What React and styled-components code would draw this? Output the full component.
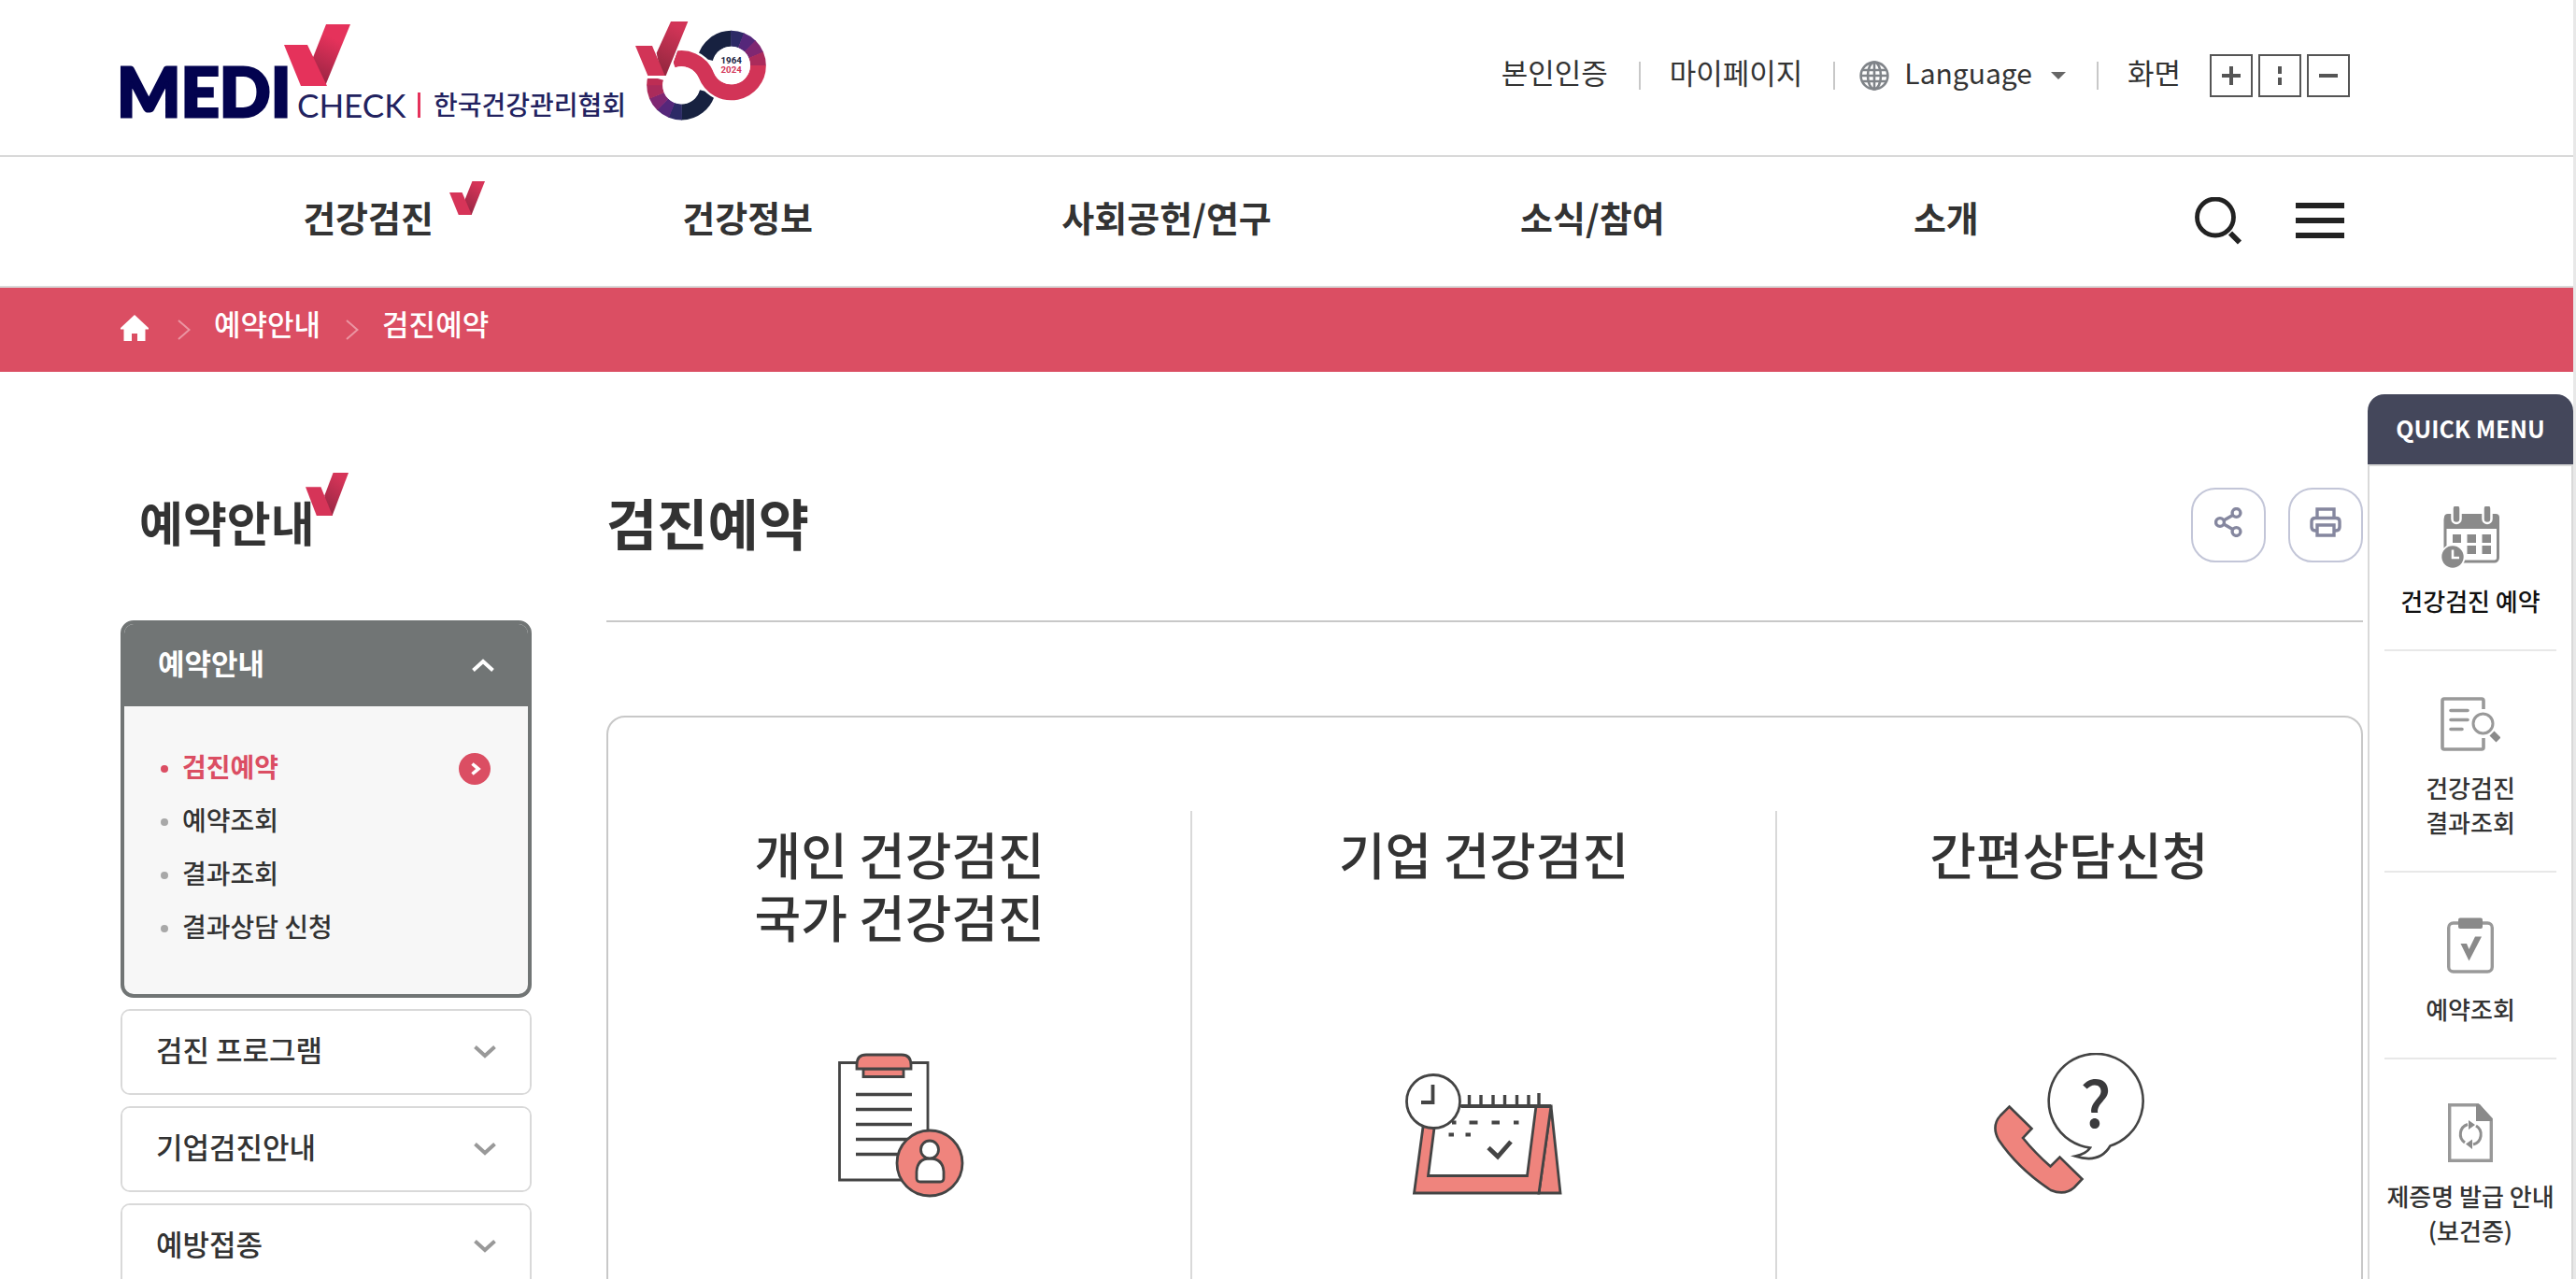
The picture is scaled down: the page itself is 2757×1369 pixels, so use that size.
import React, { useId, useState } from "react";
import styled, { createGlobalStyle } from "styled-components";

const GlobalStyle = createGlobalStyle`
  *, *::before, *::after { box-sizing: border-box; }
  html { scrollbar-width: none; }
  body {
    margin: 0;
    background: #fff;
    color: #333;
    font-family: "Noto Sans CJK KR", "Noto Sans", sans-serif;
    font-size: 31px;
    line-height: 46px;
  }
  a { color: inherit; text-decoration: none; }
  button { margin: 0; padding: 0; border: 0; background: none; color: inherit; font: inherit; cursor: pointer; }
  ul, ol { margin: 0; padding: 0; list-style: none; }
  h1, h2, h3 { margin: 0; font-weight: 700; }
  svg { display: block; flex: none; }
`;

const Page = styled.div`
  min-height: 100vh;
  border-right: 3px solid #e8e8e8;
`;

const Row = styled.div`
  display: flex;
  align-items: center;
  padding: 0 225px 0 129px;
`;

const TopBar = styled(Row)`
  height: 168px;
  padding-left: 119px;
  border-bottom: 2px solid #d9d9d9;
`;

const Brand = styled.div`
  display: flex;
  align-items: flex-start;
  align-self: flex-start;
  padding-top: 23px;
  margin-right: auto;
`;

const Utility = styled.ul`
  display: flex;
  align-items: center;
  padding: 0 14px 12px 0;
`;

const UtilityItem = styled.li`
  display: flex;
  align-items: center;
  & + &::before {
    content: "";
    width: 2px;
    height: 30px;
    margin: 8px 31px 0 33px;
    background: #c8c8c8;
  }
`;

const LanguageItem = styled(UtilityItem)`
  & + &::before, ${UtilityItem} + &::before { margin-right: 26px; }
`;

const LanguageButton = styled.button`
  display: flex;
  align-items: center;
  font-size: 30px;
  svg { margin-top: 8px; }
`;

const LanguageLabel = styled.span`
  padding: 0 20px 0 16px;
`;

const ZoomGroup = styled.div`
  display: flex;
  gap: 6px;
  margin: 8px 0 0 31px;
`;

const ZoomButton = styled.button`
  display: flex;
  align-items: center;
  justify-content: center;
  width: 46px;
  height: 46px;
  border: 2px solid #555;
`;

const NavBar = styled(Row)`
  height: 140px;
  border-bottom: 2px solid #d9d9d9;
`;

const NavList = styled.ul`
  display: flex;
  flex: 1;
  justify-content: space-around;
  padding: 0 0 10px 62px;
`;

const NavItem = styled.li`
  position: relative;
  font-size: 38px;
  line-height: 56px;
  font-weight: 700;
`;

const NavCheck = styled.span`
  position: absolute;
  left: 100%;
  top: -10px;
  margin-left: 17px;
`;

const NavTools = styled.div`
  display: flex;
  align-items: center;
  gap: 56px;
  padding: 0 20px 0 98px;
`;

const CrumbBar = styled.nav`
  background: #db4e63;
  color: #fff;
`;

const CrumbList = styled.ol`
  display: flex;
  align-items: center;
  height: 90px;
  padding: 0 225px 0 129px;
`;

const Crumb = styled.li`
  display: flex;
  align-items: center;
  font-weight: 500;
  svg { margin-right: 25px; }
  & + & { margin-left: 27px; }
  a { padding-bottom: 14px; }
`;

const HomeCrumb = styled(Crumb)`
  a { padding: 0; }
  svg { margin: 0 4px 4px 0; }
`;

const Main = styled.div`
  display: grid;
  grid-template-columns: 440px minmax(0, 1fr);
  column-gap: 80px;
  padding: 0 225px 0 129px;
`;

const SideTitle = styled.h2`
  display: flex;
  align-items: flex-start;
  height: 266px;
  padding: 122px 0 0 20px;
  font-size: 51px;
  line-height: 76px;
`;

const SideCheck = styled.span`
  margin: -14px 0 0 -10px;
`;

const Accordion = styled.ul`
  display: grid;
  gap: 12px;
`;

const Panel = styled.li`
  overflow: hidden;
  border: ${(p) => (p.$open ? "4px solid #717575" : "2px solid #d9d9d9")};
  border-radius: ${(p) => (p.$open ? "14px" : "10px")};
  background: ${(p) => (p.$open ? "#f7f7f7" : "#fff")};
`;

const PanelButton = styled.button`
  display: flex;
  align-items: center;
  justify-content: space-between;
  width: 100%;
  height: 88px;
  padding: 0 36px;
  background: ${(p) => (p.$open ? "#717575" : "#fff")};
  color: ${(p) => (p.$open ? "#fff" : "#333")};
  font-weight: ${(p) => (p.$open ? 700 : 500)};
  text-align: left;
  span { padding-bottom: 6px; }
`;

const SubList = styled.ul`
  padding: 38px 40px 42px 39px;
`;

const SubLink = styled.a`
  display: flex;
  align-items: center;
  height: 57px;
  color: ${(p) => (p.$active ? "#db4e63" : "#333")};
  font-size: 28px;
  line-height: 40px;
  font-weight: ${(p) => (p.$active ? 700 : 500)};
  svg { margin-left: auto; }
  span { padding-bottom: 6px; }
  &::before {
    content: "";
    width: 8px;
    height: 8px;
    margin-right: 15px;
    border-radius: 50%;
    background: ${(p) => (p.$active ? "#db4e63" : "#a8a8a8")};
  }
`;

const TitleRow = styled.div`
  display: flex;
  align-items: flex-start;
  gap: 24px;
  height: 268px;
  padding-top: 124px;
  border-bottom: 2px solid #c8c8c8;
`;

const PageTitle = styled.h1`
  margin: -6px auto 0 0;
  font-size: 59px;
  line-height: 86px;
`;

const RoundButton = styled.button`
  display: flex;
  align-items: center;
  justify-content: center;
  width: 80px;
  height: 80px;
  padding-bottom: 6px;
  border: 2px solid #c3c6d8;
  border-radius: 26px;
`;

const Card = styled.ul`
  display: grid;
  grid-template-columns: repeat(3, minmax(0, 1fr));
  margin-top: 100px;
  padding: 100px 0;
  border: 2px solid #c8c8c8;
  border-radius: 20px;
`;

const Service = styled.li`
  padding: 12px 0 160px;
  &:not(:last-child) { border-right: 2px solid #d9d9d9; }
`;

const ServiceLink = styled.a`
  display: flex;
  flex-direction: column;
  align-items: center;
  gap: 113px;
`;

const ServiceName = styled.h3`
  min-height: 134px;
  font-size: 54px;
  line-height: 67px;
  font-weight: 500;
  text-align: center;
`;

const Quick = styled.aside`
  position: absolute;
  top: 422px;
  right: 3px;
  width: 220px;
`;

const QuickHead = styled.h2`
  height: 75px;
  padding-top: 16px;
  border-radius: 18px 18px 0 0;
  background: #44475b;
  color: #fff;
  font-size: 25px;
  line-height: 40px;
  text-align: center;
`;

const QuickList = styled.ul`
  padding: 0 16px;
  border: 2px solid #d9d9d9;
  background: #fff;
`;

const QuickItem = styled.li`
  padding: 44px 0 34px;
  &:first-child { padding-top: 42px; color: #111; }
  & + & { border-top: 2px solid #e8e8e8; }
`;

const QuickLink = styled.a`
  display: flex;
  flex-direction: column;
  align-items: center;
  gap: 15px;
  font-size: 26px;
  line-height: 37px;
  font-weight: 500;
  text-align: center;
  white-space: nowrap;
`;

const QuickIcon = styled.span`
  display: flex;
  align-items: center;
  height: 68px;
`;

const Lines = ({ items }) =>
  items.map((line, i) => (
    <React.Fragment key={line}>
      {i > 0 && <br />}
      {line}
    </React.Fragment>
  ));

function CheckMark({ width, height }) {
  const id = useId();
  return (
    <svg width={width} height={height} viewBox="0 0 140 136" preserveAspectRatio="none" aria-hidden="true">
      <defs>
        <linearGradient id={id} x1="0.7" y1="0" x2="0.3" y2="1">
          <stop offset="0.1" stopColor="#d63458" />
          <stop offset="1" stopColor="#982744" />
        </linearGradient>
      </defs>
      <path d="M90 0H140L87 136H62V72Z" fill={`url(#${id})`} />
      <path d="M0 45H50L88 136H36Z" fill="#d63458" />
    </svg>
  );
}

function Wordmark() {
  return (
    <svg width="561" height="130" viewBox="119 23 561 130" role="img" aria-label="MEDICHECK 한국건강관리협회">
      <defs>
        <linearGradient id="wordmark-leg" x1="0.7" y1="0" x2="0.4" y2="1">
          <stop offset="0.25" stopColor="#e5325b" />
          <stop offset="1" stopColor="#9a2443" />
        </linearGradient>
      </defs>
      <text x="125" y="125" fontFamily="Lato, sans-serif" fontWeight="900" fontSize="72" fill="#03034f" stroke="#03034f" strokeWidth="3">MEDI</text>
      <path d="M349 26H375L348 92H334V64Z" fill="url(#wordmark-leg)" />
      <path d="M304 48H329L350 92H322Z" fill="#e5325b" />
      <text x="318" y="126" fontFamily="Lato, sans-serif" fontSize="35" fill="#22225f">CHECK</text>
      <rect x="447" y="99" width="3" height="27" fill="#e5325b" />
      <text x="464" y="123" fontFamily="Noto Sans CJK KR, sans-serif" fontWeight="500" fontSize="28" fill="#22225f">한국건강관리협회</text>
    </svg>
  );
}

const ring = (cx, cy, from, to) => {
  const r = 86;
  const p = (a) => `${cx + r * Math.cos((a * Math.PI) / 180)} ${cy + r * Math.sin((a * Math.PI) / 180)}`;
  return `M${p(from)}A${r} ${r} 0 0 1 ${p(to)}`;
};

function Anniversary() {
  const shades = ["#172140", "#2c2a66", "#55277a", "#7f2772", "#ab2b5b"];
  const right = [-166, -90, -68, -45, -22, 0];
  const left = [14, 90, 112, 135, 158, 181];
  return (
    <svg width="140" height="106" viewBox="57 39 420 318" role="img" aria-label="1964 2024">
      <defs>
        <linearGradient id="anniversary-leg" x1="0.7" y1="0" x2="0.4" y2="1">
          <stop offset="0.1" stopColor="#d23457" />
          <stop offset="1" stopColor="#94273f" />
        </linearGradient>
      </defs>
      <g fill="none" strokeWidth="51">
        {shades.map((c, i) => (
          <g key={c} stroke={c}>
            <path d={ring(365, 180, right[i] - (i && 1), right[i + 1])} />
            <path d={ring(205, 244, left[i] - (i && 1), left[i + 1])} />
          </g>
        ))}
        <path d={ring(205, 244, 180, 196)} stroke="#bd2d54" />
        <path d="M176 163A86 86 0 0 1 285 212A86 86 0 0 0 365 266" stroke="#fff" strokeWidth="65" />
        <path d="M176 163A86 86 0 0 1 285 212A86 86 0 0 0 451 180" stroke="#d23457" />
      </g>
      <circle cx="365" cy="180" r="61" fill="#fff" />
      <circle cx="205" cy="244" r="60" fill="#fff" />
      <path d="M226 39L163 213L163 222H80V110L171 39Z" fill="#fff" />
      <path d="M192 133L168 200L140 222L150 120Z" fill="#fff" />
      <path d="M171 39H226L155 213H140L125 140Z" fill="url(#anniversary-leg)" />
      <path d="M57 117H111L152 213H97Z" fill="#d23457" />
      <g fontFamily="Roboto, sans-serif" fontWeight="700" fontSize="29" textAnchor="middle">
        <text x="365" y="174" fill="#172140">1964</text>
        <text x="365" y="204" fill="#d23457">2024</text>
      </g>
    </svg>
  );
}

const Globe = () => (
  <svg width="32" height="32" viewBox="0 0 32 32" fill="none" stroke="#808489" strokeWidth="2.6" aria-hidden="true">
    <circle cx="16" cy="16" r="14.4" />
    <ellipse cx="16" cy="16" rx="7" ry="14.4" />
    <path d="M16 1V31M1.5 16H30.5M3.5 10H28.5M3.5 22H28.5" />
  </svg>
);

const Caret = () => (
  <svg width="16" height="8" viewBox="0 0 16 8" aria-hidden="true">
    <path d="M0 0H16L8 8Z" fill="#666" />
  </svg>
);

const zoomMarks = { plus: "M0 10H20M10 0V20", reset: "M10 0V8M10 12V20", minus: "M0 10H20" };

const ZoomMark = ({ kind }) => (
  <svg width="20" height="20" viewBox="0 0 20 20" stroke="#555" strokeWidth="4" aria-hidden="true">
    <path d={zoomMarks[kind]} />
  </svg>
);

const SearchIcon = () => (
  <svg width="52" height="52" viewBox="0 0 52 52" fill="none" stroke="#222" aria-hidden="true">
    <circle cx="22" cy="21.500" r="19.5" strokeWidth="4.8" />
    <path d="M38 38.500L48 48.500" strokeWidth="5.8" />
  </svg>
);

const MenuIcon = () => (
  <svg width="52" height="40" viewBox="0 0 52 40" stroke="#222" strokeWidth="6" aria-hidden="true">
    <path d="M0 3H52M0 19H52M0 35H52" />
  </svg>
);

const HomeIcon = () => (
  <svg width="30" height="28" viewBox="0 0 30 28" fill="#fff" aria-hidden="true">
    <path d="M15 0L30 14V15.500H26.500V28H18V20H12V28H3.500V15.500H0V14Z" />
  </svg>
);

const CrumbArrow = () => (
  <svg width="14" height="22" viewBox="0 0 14 22" fill="none" stroke="#eb95a2" strokeWidth="2" aria-hidden="true">
    <path d="M1 1L12.500 11L1 21" />
  </svg>
);

const Chevron = ({ open }) => (
  <svg width="24" height="14" viewBox="0 0 24 14" fill="none" stroke={open ? "#fff" : "#999"} strokeWidth="4" aria-hidden="true">
    <path d={open ? "M1.500 12.500L12 3L22.500 12.500" : "M1.500 1.500L12 11L22.500 1.500"} />
  </svg>
);

const ActiveArrow = () => (
  <svg width="34" height="34" viewBox="0 0 34 34" aria-hidden="true">
    <circle cx="17" cy="17" r="17" fill="#db4e63" />
    <path d="M14.500 11.500L21 17L14.500 22.500" fill="none" stroke="#fff" strokeWidth="3.600" />
  </svg>
);

const ShareIcon = () => (
  <svg width="30" height="32" viewBox="0 0 30 32" fill="none" stroke="#85879f" strokeWidth="3.400" aria-hidden="true">
    <circle cx="6" cy="16" r="4.400" />
    <circle cx="23.500" cy="6" r="4.400" />
    <circle cx="23.500" cy="26" r="4.400" />
    <path d="M10 14L19.500 8.500M10 18L19.500 23.500" />
  </svg>
);

const PrintIcon = () => (
  <svg width="34" height="32" viewBox="0 0 34 32" fill="none" stroke="#85879f" strokeWidth="3.400" aria-hidden="true">
    <path d="M8 11V2H26V11M8 25H6Q2 25 2 21V15Q2 11.500 6 11.500H28Q32 11.500 32 15V21Q32 25 28 25H26" />
    <path d="M8 19H26V30H8Z" />
  </svg>
);

const ClipboardArt = () => (
  <svg width="168" height="156" viewBox="0 0 168 156" stroke="#444" strokeWidth="2.800" fill="#ef847d" aria-hidden="true">
    <path d="M19.500 10.500H114V136H19.500Z" fill="#fff" />
    <path d="M45 17H88V25.500H45Z" />
    <path d="M38 17V13Q38 2 48 2H86Q96 2 96 13V17Z" />
    <path d="M37 44.500H97M37 60.500H97M37 76.500H97M37 92.500H97M37 108.500H97" strokeWidth="3.400" />
    <circle cx="116" cy="118" r="35" />
    <path d="M102 134V127Q103 113 116 113Q130 113 131 127V134Q131 138 127 138H106Q102 138 102 134Z" fill="#fff" />
    <circle cx="116" cy="103.500" r="9.500" fill="#fff" />
  </svg>
);

const CalendarArt = () => (
  <svg width="168" height="156" viewBox="0 0 168 156" stroke="#444" strokeWidth="2.800" fill="#ef847d" aria-hidden="true">
    <path d="M156 57L166 150H143Z" />
    <path d="M22 57H156L143 150H9.500Z" />
    <path d="M34 57H140L130.500 131.500H24.500Z" fill="#fff" />
    <path d="M60 57H156" strokeWidth="4" />
    <path d="M68.500 45V57M81 45V57M94 45V57M106.500 45V57M119.500 45V57M132 45V57M143 43V57" strokeWidth="3.400" />
    <path d="M50 74.500H54.500M68.500 74.500H77.500M92.500 74.500H101M116 74.500H121.500M46.500 87.500H52M64.500 87.500H70" strokeWidth="4" />
    <path d="M89 101.500L99 111L113 95" strokeWidth="4.800" fill="none" />
    <circle cx="30" cy="52" r="28.500" fill="#fff" />
    <path d="M29.500 34V53H17" strokeWidth="3.800" fill="none" />
  </svg>
);

const PhoneArt = () => (
  <svg width="168" height="156" viewBox="0 0 168 156" stroke="#444" strokeWidth="2.600" aria-hidden="true">
    <path d="M20.500 57.500L44.500 81L35 91Q48 107 64.500 121.500L74.500 111.500L98.500 135L90 144Q80 153 65 147Q30 124 9 93Q1 78 11 67Z" fill="#ef847d" />
    <path d="M128.500 99.500A50.500 50.500 0 1 0 107 101.500Q103 108 91 110.500Q117 119 128.500 99.500Z" fill="#fff" />
    <text x="113" y="80" fontSize="68" fontWeight="500" textAnchor="middle" fill="#3a3a3c" stroke="none">?</text>
  </svg>
);

const QuickCalendar = () => (
  <svg width="62" height="66" viewBox="0 0 62 66" fill="#8a8a8a" aria-hidden="true">
    <rect x="4" y="10" width="56.500" height="49" rx="4" fill="#fff" stroke="#8a8a8a" strokeWidth="3" />
    <path d="M3 24V12Q3 8 7 8H58Q62 8 62 12V24Z" />
    <g stroke="#fff" strokeWidth="2.500">
      <rect x="11.500" y="-2" width="9" height="20" rx="4.500" />
      <rect x="44.500" y="-2" width="9" height="20" rx="4.500" />
    </g>
    <path d="M12 30H21V39H12ZM27.500 30H37V39H27.500ZM43.500 30H53V39H43.500ZM27.500 42H37V51H27.500ZM43.500 42H53V51H43.500Z" />
    <circle cx="12" cy="54" r="13.500" fill="#fff" />
    <circle cx="12" cy="54" r="11.700" />
    <path d="M12 46.500V55H19" fill="none" stroke="#fff" strokeWidth="2.600" />
  </svg>
);

const QuickResult = () => (
  <svg width="64" height="58" viewBox="0 0 64 58" fill="none" stroke="#999" strokeWidth="3.600" aria-hidden="true">
    <path d="M46 13V4Q46 2 44 2H4Q2 2 2 4V54Q2 56 4 56H44Q46 56 46 54V44" />
    <path d="M11 14.500H29M11 24.500H29M11 34.500H23" strokeLinecap="round" />
    <circle cx="45.500" cy="28.500" r="10.500" strokeWidth="3" />
    <path d="M55 39L62 46" stroke="#8a8a8a" strokeWidth="7" />
  </svg>
);

const QuickCheck = () => (
  <svg width="50" height="60" viewBox="0 0 50 60" fill="#8a8a8a" aria-hidden="true">
    <rect x="1.700" y="6" width="46.600" height="52" rx="5" fill="#fff" stroke="#999" strokeWidth="3.400" />
    <rect x="12" y="0.500" width="26" height="11.500" rx="2" />
    <path d="M14.500 28H21L23.500 34L30 20.500H37L23.500 46.500Z" />
  </svg>
);

const QuickCertificate = () => (
  <svg width="48" height="63" viewBox="0 0 48 63" fill="#8a8a8a" aria-hidden="true">
    <path d="M1.700 1.700H32L46.300 17V61.300H1.700Z" fill="#fff" stroke="#999" strokeWidth="3.400" />
    <path d="M30 1H34L47 16V19H30Z" />
    <path d="M18 42A11 11 0 0 1 21 22.500M30 24A11 11 0 0 1 27 44" fill="none" stroke="#8f8f8f" strokeWidth="3" />
    <path d="M22 18L29 23L22 28ZM26 38.500V49L19 43.500Z" />
  </svg>
);

const menu = ["건강검진", "건강정보", "사회공헌/연구", "소식/참여", "소개"];

const panels = [
  { name: "예약안내", links: ["검진예약", "예약조회", "결과조회", "결과상담 신청"] },
  { name: "검진 프로그램", links: [] },
  { name: "기업검진안내", links: [] },
  { name: "예방접종", links: [] },
];

const services = [
  { lines: ["개인 건강검진", "국가 건강검진"], Art: ClipboardArt },
  { lines: ["기업 건강검진"], Art: CalendarArt },
  { lines: ["간편상담신청"], Art: PhoneArt },
];

const quickLinks = [
  { lines: ["건강검진 예약"], Icon: QuickCalendar },
  { lines: ["건강검진", "결과조회"], Icon: QuickResult },
  { lines: ["예약조회"], Icon: QuickCheck },
  { lines: ["제증명 발급 안내", "(보건증)"], Icon: QuickCertificate },
];

export default function App() {
  const [openPanel, setOpenPanel] = useState("예약안내");

  return (
    <Page>
      <GlobalStyle />
      <header>
        <TopBar>
          <Brand>
            <a href="#home"><Wordmark /></a>
            <Anniversary />
          </Brand>
          <Utility>
            <UtilityItem><a href="#verify">본인인증</a></UtilityItem>
            <UtilityItem><a href="#mypage">마이페이지</a></UtilityItem>
            <LanguageItem>
              <LanguageButton type="button" aria-haspopup="true">
                <Globe />
                <LanguageLabel>Language</LanguageLabel>
                <Caret />
              </LanguageButton>
            </LanguageItem>
            <UtilityItem>
              화면
              <ZoomGroup>
                <ZoomButton type="button" aria-label="확대"><ZoomMark kind="plus" /></ZoomButton>
                <ZoomButton type="button" aria-label="기본"><ZoomMark kind="reset" /></ZoomButton>
                <ZoomButton type="button" aria-label="축소"><ZoomMark kind="minus" /></ZoomButton>
              </ZoomGroup>
            </UtilityItem>
          </Utility>
        </TopBar>
        <NavBar as="nav">
          <NavList>
            {menu.map((name, i) => (
              <NavItem key={name}>
                <a href={`#menu-${i + 1}`}>{name}</a>
                {i === 0 && <NavCheck><CheckMark width={38} height={36} /></NavCheck>}
              </NavItem>
            ))}
          </NavList>
          <NavTools>
            <button type="button" aria-label="검색"><SearchIcon /></button>
            <button type="button" aria-label="전체메뉴"><MenuIcon /></button>
          </NavTools>
        </NavBar>
      </header>
      <CrumbBar>
        <CrumbList>
          <HomeCrumb><a href="#home" aria-label="홈"><HomeIcon /></a></HomeCrumb>
          <Crumb><CrumbArrow /><a href="#guide">예약안내</a></Crumb>
          <Crumb><CrumbArrow /><a href="#reserve">검진예약</a></Crumb>
        </CrumbList>
      </CrumbBar>
      <Main>
        <aside>
          <SideTitle>
            예약안내
            <SideCheck><CheckMark width={46} height={46} /></SideCheck>
          </SideTitle>
          <Accordion>
            {panels.map(({ name, links }) => {
              const open = name === openPanel && links.length > 0;
              return (
                <Panel key={name} $open={open}>
                  <PanelButton
                    type="button"
                    $open={open}
                    aria-expanded={open}
                    onClick={() => setOpenPanel(open ? "" : name)}
                  >
                    <span>{name}</span>
                    <Chevron open={open} />
                  </PanelButton>
                  {open && (
                    <SubList>
                      {links.map((link, i) => (
                        <li key={link}>
                          <SubLink href={`#guide-${i + 1}`} $active={i === 0}>
                            <span>{link}</span>
                            {i === 0 && <ActiveArrow />}
                          </SubLink>
                        </li>
                      ))}
                    </SubList>
                  )}
                </Panel>
              );
            })}
          </Accordion>
        </aside>
        <main>
          <TitleRow>
            <PageTitle>검진예약</PageTitle>
            <RoundButton type="button" aria-label="공유"><ShareIcon /></RoundButton>
            <RoundButton type="button" aria-label="인쇄"><PrintIcon /></RoundButton>
          </TitleRow>
          <Card>
            {services.map(({ lines, Art }, i) => (
              <Service key={lines[0]}>
                <ServiceLink href={`#service-${i + 1}`}>
                  <ServiceName><Lines items={lines} /></ServiceName>
                  <Art />
                </ServiceLink>
              </Service>
            ))}
          </Card>
        </main>
      </Main>
      <Quick>
        <QuickHead>QUICK MENU</QuickHead>
        <QuickList>
          {quickLinks.map(({ lines, Icon }, i) => (
            <QuickItem key={lines[0]}>
              <QuickLink href={`#quick-${i + 1}`}>
                <QuickIcon><Icon /></QuickIcon>
                <span><Lines items={lines} /></span>
              </QuickLink>
            </QuickItem>
          ))}
        </QuickList>
      </Quick>
    </Page>
  );
}
